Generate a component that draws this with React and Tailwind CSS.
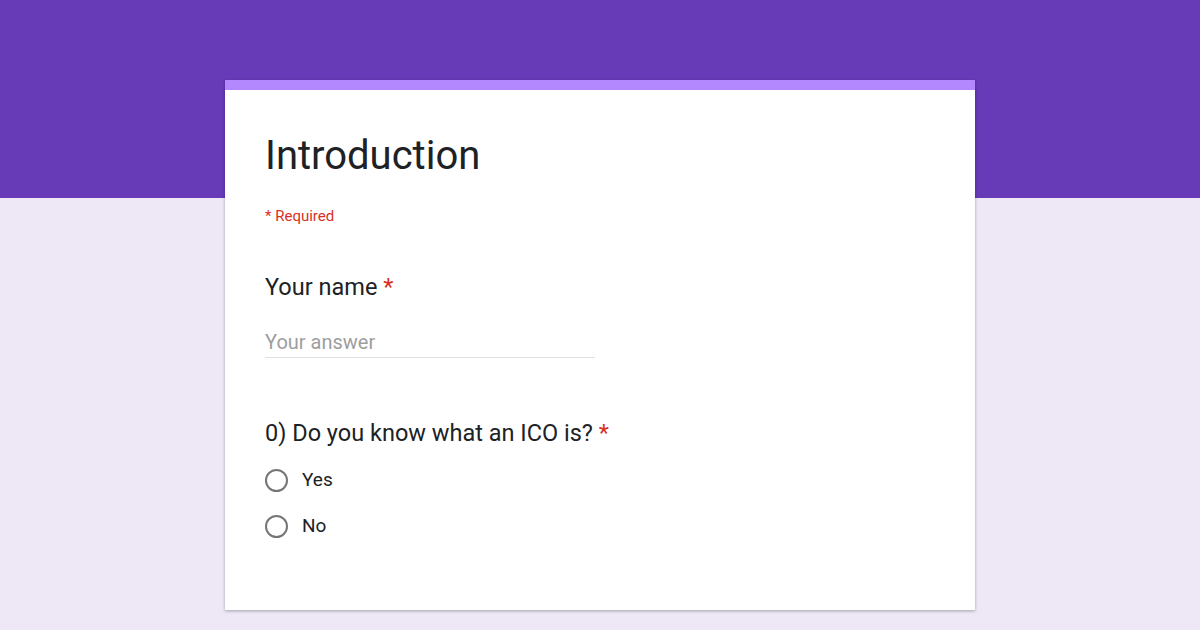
export default function App() {
  return (
    <div className="w-[1200px] h-[630px] bg-[#ede7f6] relative overflow-hidden" style={{ fontFamily: "Roboto, 'Liberation Sans', sans-serif" }}>
      <div className="h-[198px] bg-[#673ab7]" />
      <div className="absolute left-[225px] top-[80px] w-[750px] h-[530px] bg-white shadow-[0_1px_3px_rgba(0,0,0,0.3)]">
        <div className="h-[10px] bg-[#b388ff]" />
        <div className="px-[40px]">
          <div className="pt-[41px] text-[40px] leading-[50px] text-[#202124]">Introduction</div>
          <div className="mt-[25px] text-[15px] leading-[20px] text-[#d93025]">* Required</div>
          <div className="mt-[46px] text-[23.5px] leading-[30px] text-[#202124]">
            Your name <span className="text-[#d93025]">*</span>
          </div>
          <div className="mt-[27px] w-[330px] border-b border-[#e0e0e0] pb-[2px] text-[20px] leading-[26px] text-[#9e9e9e]">Your answer</div>
          <div className="mt-[60px] text-[23.5px] leading-[30px] text-[#202124]">
            0) Do you know what an ICO is? <span className="text-[#d93025]">*</span>
          </div>
          <div className="mt-[21px] flex flex-col gap-[24px]">
            {["Yes", "No"].map((t) => (
              <div key={t} className="flex items-center gap-[14px] h-[22px]">
                <div className="w-[23px] h-[23px] rounded-full border-2 border-[#757575]" />
                <span className="text-[19px] text-[#202124]">{t}</span>
              </div>
            ))}
          </div>
        </div>
      </div>
    </div>
  );
}
